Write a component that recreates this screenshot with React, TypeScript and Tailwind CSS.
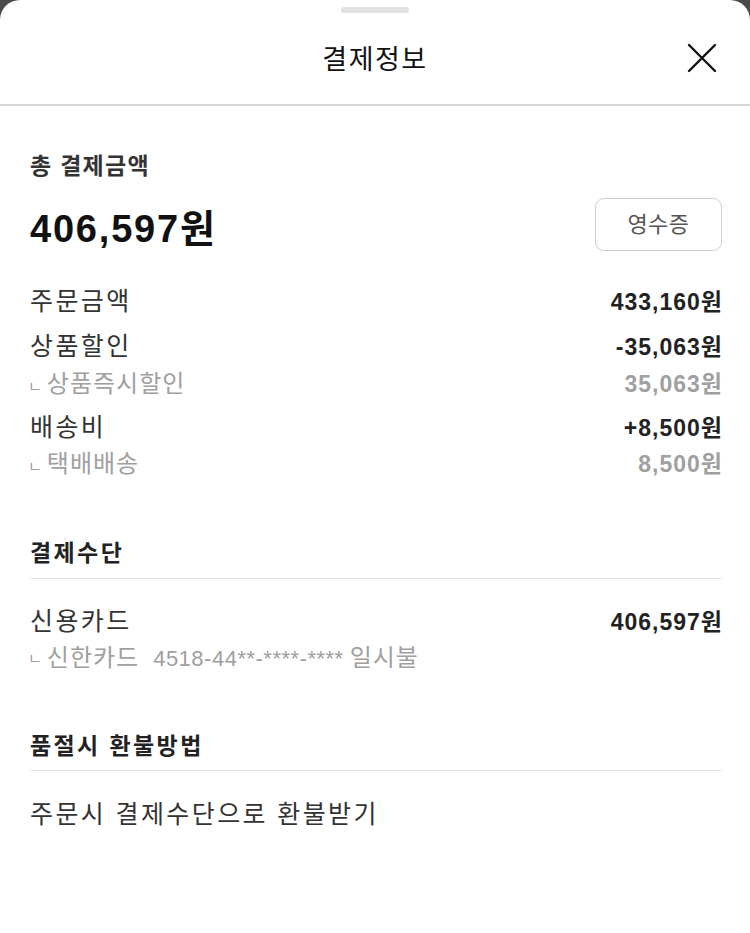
import React from "react";

const font = { fontFamily: '"Liberation Sans", "Noto Sans CJK KR", sans-serif' };

type Row = { label: string; value: string; sub?: boolean; gap: string };

const rows: Row[] = [
  { label: "주문금액", value: "433,160원", gap: "mt-[33px]" },
  { label: "상품할인", value: "-35,063원", gap: "mt-[9px]" },
  { label: "상품즉시할인", value: "35,063원", sub: true, gap: "mt-[1px]" },
  { label: "배송비", value: "+8,500원", gap: "mt-[8px]" },
  { label: "택배배송", value: "8,500원", sub: true, gap: "mt-0" },
];

function CloseIcon() {
  return (
    <svg width="32" height="32" viewBox="0 0 32 32" fill="none">
      <path d="M3 3L29 29M29 3L3 29" stroke="#111" strokeWidth="2.4" strokeLinecap="round" />
    </svg>
  );
}

function SubMark() {
  return <span className="-ml-[2px] mr-[4px] inline-block text-[15px] leading-none">ㄴ</span>;
}

function SectionTitle({ title }: { title: string }) {
  return (
    <div className="border-b border-[#e3e3e3] pb-[10px] text-[23px] font-bold leading-[30px] tracking-[2.4px] text-[#222]">
      {title}
    </div>
  );
}

export default function App() {
  return (
    <div className="h-[933px] w-[750px] bg-[#4a4a4a]" style={font}>
      <div className="flex h-full flex-col rounded-t-[20px] bg-white">
        {/* handle */}
        <div className="flex justify-center pt-[7px]">
          <div className="h-[6px] w-[68px] rounded-full bg-[#e2e2e2]" />
        </div>

        {/* header */}
        <div className="relative flex h-[93px] items-center justify-center border-b-2 border-[#d6d6d6]">
          <h1 className="pt-[4px] text-[27px] tracking-[1.5px] text-[#111]">결제정보</h1>
          <button className="absolute right-[32px] top-[29px]">
            <CloseIcon />
          </button>
        </div>

        <div className="pl-[30px] pr-[28px]">
          {/* total */}
          <div className="pt-[45px] text-[23px] font-semibold leading-[30px] tracking-[1.3px] text-[#333]">총 결제금액</div>
          <div className="mt-[17px] flex items-center justify-between">
            <div className="pt-[8px] text-[38px] font-bold leading-none tracking-[1.8px] text-[#111]">406,597원</div>
            <button className="h-[53px] w-[127px] rounded-[9px] border border-[#cfcfcf] text-[22px] tracking-[0.5px] text-[#555]">
              영수증
            </button>
          </div>

          {/* breakdown */}
          <div className="flex flex-col">
            {rows.map((r, i) => (
              <div key={i} className={`flex h-[36px] items-center justify-between ${r.gap}`}>
                {r.sub ? (
                  <span className="text-[24px] tracking-[1px] text-[#a0a0a0]">
                    <SubMark />
                    {r.label}
                  </span>
                ) : (
                  <span className="text-[25px] tracking-[2.4px] text-[#333]">{r.label}</span>
                )}
                <span className={`-mr-[1px] text-[23px] font-bold tracking-[1px] ${r.sub ? "text-[#a0a0a0]" : "text-[#222]"}`}>
                  {r.value}
                </span>
              </div>
            ))}
          </div>

          {/* payment method */}
          <div className="mt-[56px]">
            <SectionTitle title="결제수단" />
            <div className="mt-[25px] flex h-[36px] items-center justify-between">
              <span className="text-[25px] tracking-[2.4px] text-[#333]">신용카드</span>
              <span className="-mr-[1px] text-[23px] font-bold tracking-[1px] text-[#222]">406,597원</span>
            </div>
            <div className="flex h-[36px] items-center text-[24px] tracking-[1px] text-[#a0a0a0]">
              <SubMark />
              <span>신한카드</span>
              <span className="ml-[14px] text-[22px] tracking-[0.5px]">4518-44**-****-****</span>
              <span className="ml-[6px]">일시불</span>
            </div>
          </div>

          {/* refund */}
          <div className="mt-[55px]">
            <div className="border-b border-[#e3e3e3] pb-[9px] text-[23px] font-bold leading-[30px] tracking-[2.4px] text-[#222]">
              품절시 환불방법
            </div>
            <div className="mt-[26px] flex h-[36px] items-center text-[25px] tracking-[2.4px] text-[#333]">
              주문시 결제수단으로 환불받기
            </div>
          </div>
        </div>
      </div>
    </div>
  );
}
